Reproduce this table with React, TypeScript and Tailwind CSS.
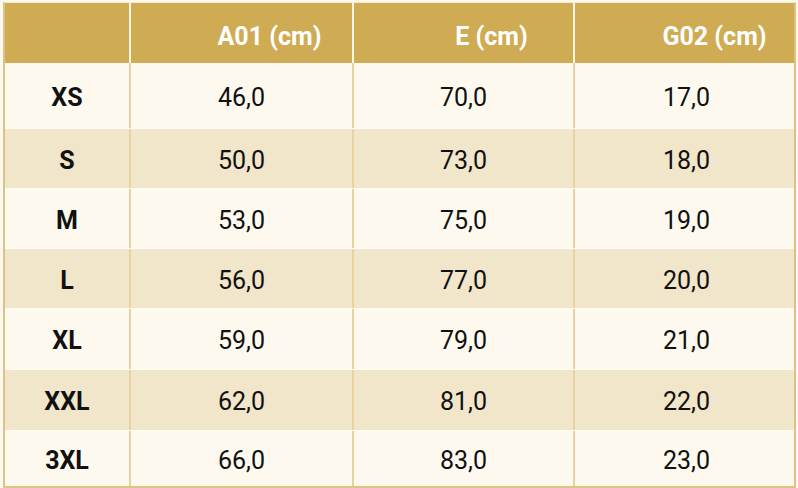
const columns = ["A01 (cm)", "E (cm)", "G02 (cm)"]

const rows = [
  { size: "XS", values: ["46,0", "70,0", "17,0"], h: "h-[65px]" },
  { size: "S", values: ["50,0", "73,0", "18,0"], h: "h-[60px]" },
  { size: "M", values: ["53,0", "75,0", "19,0"], h: "h-[60px]" },
  { size: "L", values: ["56,0", "77,0", "20,0"], h: "h-[60px]" },
  { size: "XL", values: ["59,0", "79,0", "21,0"], h: "h-[61px]" },
  { size: "XXL", values: ["62,0", "81,0", "22,0"], h: "h-[61px]" },
  { size: "3XL", values: ["66,0", "83,0", "23,0"], h: "h-[56px]" },
]

const grid = "grid grid-cols-[126px_223px_221px_223px]"

export default function App() {
  return (
    <div
      className="w-[798px] h-[488px] bg-[#fbf8f0] pl-[3px] pt-[2px]"
      style={{ fontFamily: "Roboto, 'Liberation Sans', sans-serif" }}
    >
      <div className="w-[793px] border-l-2 border-b-2 border-r-2 border-[#dcc384] border-t border-t-[#f3ead4]">
        <div className={`${grid} h-[60px] bg-[#cfab54] text-white text-[25px] font-bold`}>
          <div className="border-r-2 border-[#fbf5e6]" />
          {columns.map((c, i) => (
            <div
              key={c}
              className={`flex items-center justify-center pl-14 pt-2 ${i < 2 ? "border-r-2 border-[#fbf5e6]" : ""}`}
            >
              {c}
            </div>
          ))}
        </div>
        {rows.map((r, idx) => (
          <div
            key={r.size}
            className={`${grid} ${r.h} text-[25px] text-[#111] ${idx % 2 === 0 ? "bg-[#fdf9ef]" : "bg-[#f1e5ca]"} ${idx > 0 ? "border-t border-[#fffcf5]" : ""}`}
          >
            <div className="flex items-center justify-center pt-1 font-bold border-r-2 border-[#e6d39f]">
              {r.size}
            </div>
            {r.values.map((v, i) => (
              <div
                key={i}
                className={`flex items-center justify-center pt-1 ${i < 2 ? "border-r-2 border-[#e6d39f]" : ""}`}
              >
                {v}
              </div>
            ))}
          </div>
        ))}
      </div>
    </div>
  )
}
